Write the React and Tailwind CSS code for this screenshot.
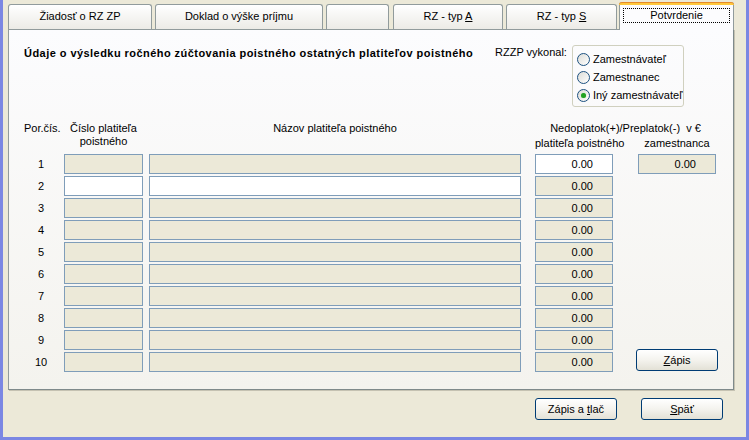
import React from 'react';

const font = { fontFamily: '"Liberation Sans", Arial, sans-serif' };

function Tab({ width, ml, active, children }) {
  if (active) {
    return (
      <div
        className={`${ml} ${width} relative z-10 -mb-px h-[28px] shrink-0 rounded-t-[3px] border-x border-[#919B9C] bg-[#FCFCFE] flex flex-col`}
      >
        <div className="h-[3px] rounded-t-[3px] bg-[#FFC83C] border-t border-[#E68B2C] -mx-px" />
        <div className="mx-[3px] mt-[3px] h-[15px] border border-dotted border-black flex items-center justify-center leading-[13px]">
          {children}
        </div>
      </div>
    );
  }
  return (
    <div
      className={`${ml} ${width} h-[25px] shrink-0 rounded-t-[3px] border-x border-t border-[#919B9C] bg-gradient-to-b from-white to-[#ECEBE6] flex items-center justify-center pb-[1px]`}
    >
      {children}
    </div>
  );
}

function Radio({ checked, label }) {
  return (
    <div className="h-[18px] flex items-center gap-[3px] pl-[4px]">
      <div className="w-[13px] h-[13px] rounded-full border border-[#1C5180] bg-gradient-to-br from-[#DCDCD7] to-white flex items-center justify-center">
        {checked && (
          <div className="w-[5px] h-[5px] rounded-full bg-[#21A121] shadow-[0_0_1px_#7ED77E]" />
        )}
      </div>
      <span className="leading-[13px]">{label}</span>
    </div>
  );
}

function Field({ width, white, value }) {
  return (
    <div
      className={`${width} h-[20px] border border-[#7F9DB9] ${white ? 'bg-white' : 'bg-[#ECE9D8]'} flex items-center justify-end pr-[19px] leading-[13px]`}
    >
      {value}
    </div>
  );
}

function Button({ width, children }) {
  return (
    <div
      className={`${width} h-[22px] rounded-[3px] border border-[#003C74] bg-gradient-to-b from-white via-[#F4F3EE] to-[#E3E1D6] flex items-center justify-center leading-[13px]`}
    >
      {children}
    </div>
  );
}

export default function App() {
  const rows = [1, 2, 3, 4, 5, 6, 7, 8, 9, 10];

  return (
    <div
      style={font}
      className="w-[749px] h-[440px] bg-[#ECE9D8] border-x-[3px] border-b-[3px] border-[#7B87E3] text-[11px] text-black flex flex-col pt-[2px]"
    >
      <div className="ml-[5px] w-[726px] flex items-end h-[27px]">
        <Tab width="w-[144px]" ml="ml-0">Žiadosť o RZ ZP</Tab>
        <Tab width="w-[168px]" ml="ml-[3px]">Doklad o výške príjmu</Tab>
        <Tab width="w-[63px]" ml="ml-[3px]"></Tab>
        <Tab width="w-[110px]" ml="ml-[4px]">
          <span>
            RZ - typ <u>A</u>
          </span>
        </Tab>
        <Tab width="w-[111px]" ml="ml-[3px]">
          <span>
            RZ - typ <u>S</u>
          </span>
        </Tab>
        <Tab width="w-[115px]" ml="ml-[2px]" active>
          Potvrdenie
        </Tab>
      </div>

      <div className="ml-[5px] w-[726px] h-[361px] border border-[#919B9C] border-r-[#7F8A8B] border-b-[#7F8A8B] shadow-[1px_1px_0_#C5C2B2] bg-gradient-to-b from-[#FCFCFE] to-[#F4F3EE] flex flex-col">
        <div className="flex items-start mt-[15px] pl-[15px]">
          <div className="font-bold w-[452px] whitespace-nowrap leading-[13px] mt-[2px] tracking-[0.45px]">
            Údaje o výsledku ročného zúčtovania poistného ostatných platiteľov poistného
          </div>
          <div className="ml-[19px] leading-[13px] whitespace-nowrap mt-[1px]">RZZP vykonal:</div>
          <div className="ml-[5px] w-[112px] h-[62px] rounded-[3px] border border-[#D0D0BF] pt-[4px]">
            <Radio label="Zamestnávateľ" />
            <Radio label="Zamestnanec" />
            <Radio label="Iný zamestnávateľ" checked />
          </div>
        </div>

        <div className="flex items-start mt-[15px] pl-[15px] h-[32px] leading-[13px]">
          <div className="w-[40px] whitespace-nowrap">Por.čís.</div>
          <div className="w-[79px] text-center">
            Číslo platiteľa
            <br />
            poistného
          </div>
          <div className="ml-[6px] w-[372px] text-center">Názov platiteľa poistného</div>
          <div className="ml-[14px] w-[181px] flex flex-col">
            <div className="text-center whitespace-pre">Nedoplatok(+)/Preplatok(-)  v €</div>
            <div className="flex mt-[2px]">
              <div className="w-[78px] text-center whitespace-nowrap">platiteľa poistného</div>
              <div className="ml-[25px] w-[78px] text-center">zamestnanca</div>
            </div>
          </div>
        </div>

        <div className="flex pl-[15px]">
          <div className="flex flex-col gap-[2px]">
            {rows.map((n) => (
              <div key={n} className="flex items-center h-[20px]">
                <div className="w-[40px] pr-[6px] text-center leading-[13px]">{n}</div>
                <Field width="w-[79px]" white={n === 2} />
                <div className="ml-[6px]">
                  <Field width="w-[372px]" white={n === 2} />
                </div>
                <div className="ml-[14px]">
                  <Field width="w-[78px]" white={n === 1} value="0.00" />
                </div>
              </div>
            ))}
          </div>
          <div className="ml-[23px] w-[82px] flex flex-col justify-between pb-[1px]">
            <div className="ml-[2px]">
              <Field width="w-[78px]" value="0.00" />
            </div>
            <Button width="w-[82px]">
              <span>
                <u>Z</u>ápis
              </span>
            </Button>
          </div>
        </div>
      </div>

      <div className="flex justify-end gap-[24px] pr-[23px] mt-[8px]">
        <Button width="w-[82px]">
          <span>
            Zápis a <u>t</u>lač
          </span>
        </Button>
        <Button width="w-[82px]">
          <span>
            <u>S</u>päť
          </span>
        </Button>
      </div>
    </div>
  );
}
